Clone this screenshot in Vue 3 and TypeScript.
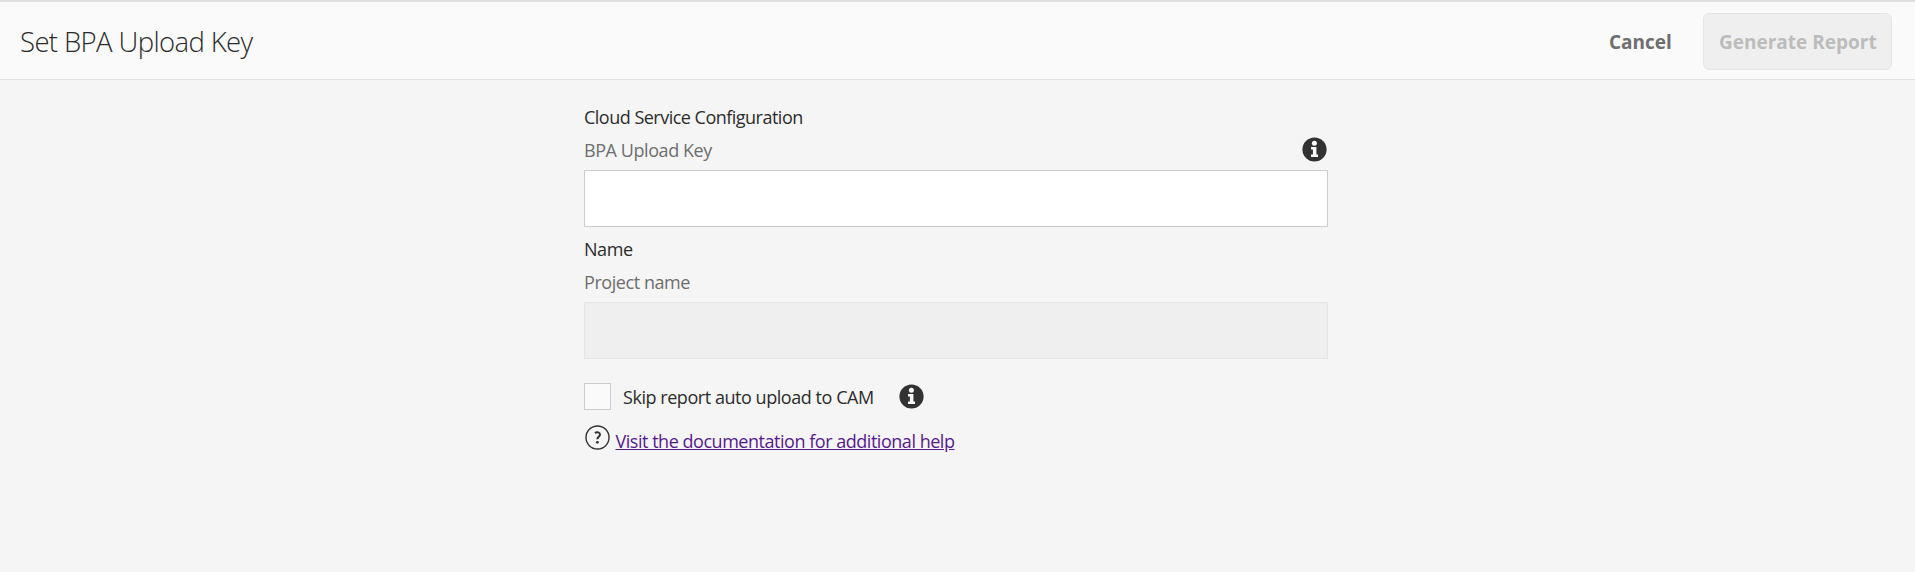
<script setup lang="ts">
import { ref } from 'vue'

const uploadKey = ref('')
const projectName = ref('')
const skipUpload = ref(false)
</script>

<template>
  <div class="page">
    <header class="bar">
      <h1 class="title">Set BPA Upload Key</h1>
      <div class="actions">
        <button class="btn cancel" type="button">Cancel</button>
        <button class="btn generate" type="button" disabled>Generate Report</button>
      </div>
    </header>
    <main class="form">
      <div class="row"><span class="t-cloud">Cloud Service Configuration</span></div>
      <div class="row label">
        <label for="key">BPA Upload Key</label>
        <svg class="info" viewBox="0 0 25 25">
          <circle cx="12.5" cy="12.5" r="12.1" fill="#323232" />
          <circle cx="12.4" cy="6.3" r="2.5" fill="#fafafa" />
          <path d="M9 10h5.4v7.5H16V20H9v-2.5h1.9v-5H9z" fill="#fafafa" />
        </svg>
      </div>
      <input id="key" v-model="uploadKey" class="field" type="text" />
      <div class="row"><span>Name</span></div>
      <div class="row label"><label for="name">Project name</label></div>
      <input id="name" v-model="projectName" class="field" type="text" disabled />
      <div class="check-row">
        <input id="skip" v-model="skipUpload" class="check" type="checkbox" />
        <label for="skip" class="t-skip">Skip report auto upload to CAM</label>
        <svg class="info" viewBox="0 0 25 25">
          <circle cx="12.5" cy="12.5" r="12.1" fill="#323232" />
          <circle cx="12.4" cy="6.3" r="2.5" fill="#fafafa" />
          <path d="M9 10h5.4v7.5H16V20H9v-2.5h1.9v-5H9z" fill="#fafafa" />
        </svg>
      </div>
      <div class="help-row">
        <svg class="help" viewBox="0 0 25 25" fill="none" stroke="#323232">
          <circle cx="12.5" cy="12.5" r="11.5" stroke-width="1.4" />
          <path d="M9.8 7.9c2.6-1.4 5.2-.5 5.2 1.6 0 2.1-2.7 2.3-2.7 4.7" stroke-width="2" />
          <circle cx="12.3" cy="17.3" r="1.4" fill="#323232" stroke="none" />
        </svg>
        <a href="#" class="t-visit">Visit the documentation for additional help</a>
      </div>
    </main>
  </div>
</template>

<style>
body {
  background: #f5f5f5;
}
</style>

<style scoped>
.page {
  box-sizing: border-box;
  height: 572px;
  background: #f5f5f5;
  font-family: "Open Sans", "Noto Sans", sans-serif;
  font-size: 18px;
  color: #2c2c2c;
}
.bar {
  box-sizing: border-box;
  height: 80px;
  display: flex;
  justify-content: space-between;
  padding: 11px 23px 0 20px;
  background: #fafafa;
  border-top: 2px solid #e1e1e1;
  border-bottom: 1px solid #e1e1e1;
}
.title {
  margin: 0;
  font-size: 27.5px;
  font-weight: 300;
  line-height: 57px;
  white-space: nowrap;
  letter-spacing: -0.62px;
}
.actions {
  display: flex;
}
.btn {
  box-sizing: border-box;
  height: 57px;
  padding: 1px 0 0;
  font: 700 19px/55px "Open Sans", "Noto Sans", sans-serif;
  text-align: left;
  white-space: nowrap;
  border: 1px solid transparent;
  background: transparent;
  color: #6e6e6e;
}
.cancel {
  width: 95px;
}
.generate {
  width: 189px;
  padding: 1px 0 0 15px;
  border-color: #e6e6e6;
  border-radius: 6px;
  background: #efefef;
  color: #bcbcbc;
}
.form {
  width: 744px;
  margin-left: 584px;
  padding-top: 21px;
  letter-spacing: -0.43px;
}
.row {
  display: flex;
  align-items: center;
  justify-content: space-between;
  height: 33px;
  line-height: 33px;
  white-space: nowrap;
}
.label {
  color: #6e6e6e;
  padding: 0 1px 3px 0;
  align-items: flex-start;
}
.t-cloud {
  letter-spacing: -0.51px;
}
.info {
  display: block;
  flex: none;
  width: 25px;
  height: 25px;
}
.label .info {
  margin-top: 3px;
}
.field {
  display: block;
  box-sizing: border-box;
  width: 744px;
  height: 57px;
  margin: 0 0 6px;
  padding: 0 15px;
  border: 1px solid #cdcdcd;
  border-radius: 0;
  background: #fff;
  font: inherit;
}
.field:disabled {
  border-color: #e6e6e6;
  background: #efefef;
}
.check-row {
  display: flex;
  height: 27px;
  margin-top: 24px;
  white-space: nowrap;
}
.check {
  appearance: none;
  box-sizing: border-box;
  flex: none;
  width: 27px;
  height: 27px;
  margin: 0 12px 0 0;
  border: 1px solid #cdcdcd;
  background: #fafafa;
}
.t-skip {
  width: 275.5px;
  line-height: 29px;
  letter-spacing: -0.45px;
}
.check-row .info {
  margin-top: 1px;
}
.help-row {
  display: flex;
  margin-top: 15px;
  padding-left: 1px;
  white-space: nowrap;
}
.help {
  width: 25px;
  height: 25px;
  margin-right: 5.5px;
}
.t-visit {
  color: #551a8b;
  line-height: 33px;
  letter-spacing: -0.47px;
  text-decoration: underline;
}
</style>
